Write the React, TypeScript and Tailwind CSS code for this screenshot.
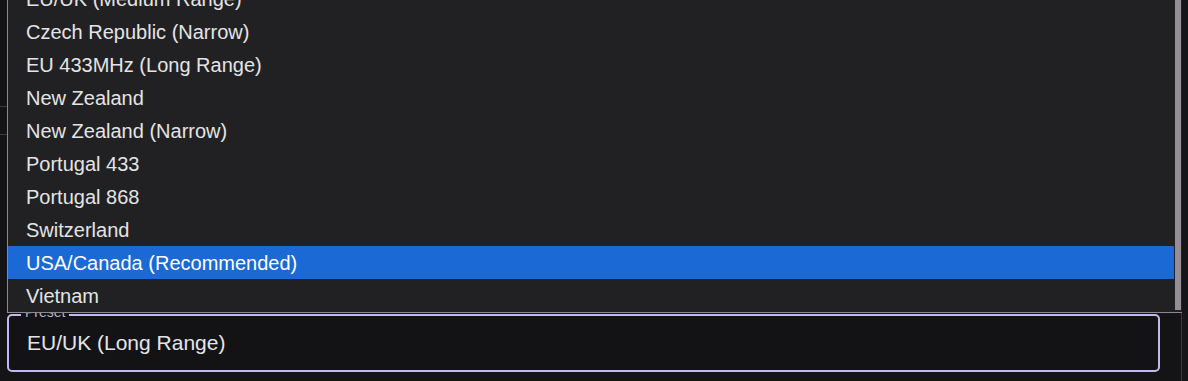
import React from "react";

const items = [
  "EU/UK (Medium Range)",
  "Czech Republic (Narrow)",
  "EU 433MHz (Long Range)",
  "New Zealand",
  "New Zealand (Narrow)",
  "Portugal 433",
  "Portugal 868",
  "Switzerland",
  "USA/Canada (Recommended)",
  "Vietnam",
];

export default function App() {
  return (
    <div
      className="relative w-[1188px] h-[381px] overflow-hidden bg-[#141416] flex"
      style={{ fontFamily: '"Liberation Sans", Arial, sans-serif' }}
    >
      <div className="w-[1181px] flex flex-col justify-end pb-[9px] pl-[7px]">
        <div className="relative w-[1153px] h-[58px] rounded-[5px] border-2 border-[#c6b6f3] bg-[#131315] flex items-center pl-[18px]">
          <span className="absolute -top-[14px] left-[12px] px-[4px] bg-[#131315] text-[14px] text-[#b9b0cc]">
            Preset
          </span>
          <span className="text-[21px] text-[#e6e4ea]">EU/UK (Long Range)</span>
        </div>
      </div>
      <div className="w-[7px] border-l border-[#3a3a3e] bg-[#161618]" />

      <div className="absolute left-0 top-[106px] w-[7px] h-px bg-[#3c3c40]" />
      <div className="absolute left-0 top-[134px] w-[7px] h-px bg-[#3c3c40]" />

      <div className="absolute left-[7px] top-0 w-[1175px] h-[313px] bg-[#212123] border-l border-b border-[#8a8a8e] overflow-hidden">
        <div className="mt-[-18px] mr-[8px] flex flex-col">
          {items.map((it) => (
            <div
              key={it}
              className={
                "h-[33px] flex items-center pl-[18px] text-[20px] " +
                (it === "USA/Canada (Recommended)"
                  ? "bg-[#1a69d4] text-white"
                  : "text-[#e4e4e6]")
              }
            >
              {it}
            </div>
          ))}
        </div>
        <div className="absolute right-[1px] top-0 w-[6px] h-[310px] bg-[#958e99]" />
      </div>
    </div>
  );
}
